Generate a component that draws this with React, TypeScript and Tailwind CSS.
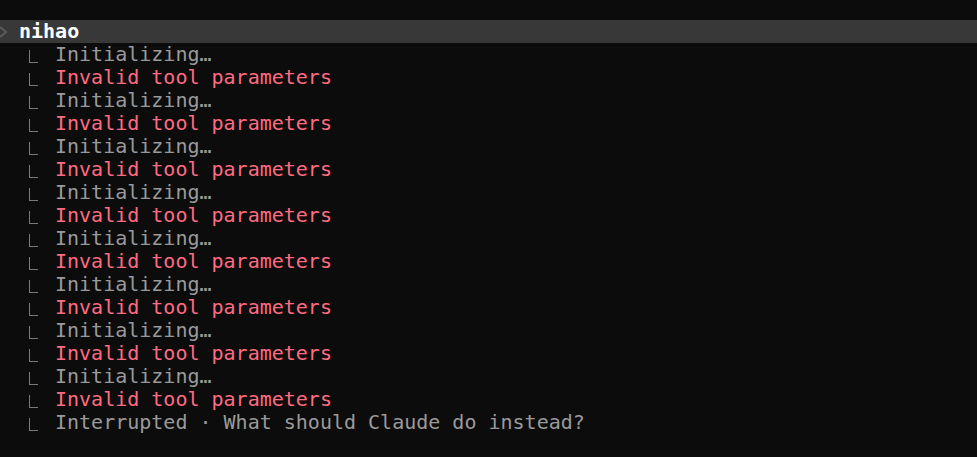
// terminal transcript view
import React from "react";

const steps = Array.from({ length: 8 });

const Branch = ({ children, tone }: { children: React.ReactNode; tone: string }) => (
  <div className="flex h-[23px] items-center">
    <span className="ml-[29px] mb-[3px] h-[13px] w-[9px] self-end border-b border-l border-[#7a7a7a]" />
    <span className={`ml-[17px] whitespace-pre ${tone}`}>{children}</span>
  </div>
);

const App = () => {
  return (
    <div
      className="h-screen w-full overflow-hidden bg-[#0c0c0c] pt-[20px] text-[20px] leading-[23px]"
      style={{ fontFamily: '"DejaVu Sans Mono", "Liberation Mono", monospace' }}
    >
      {/* prompt row */}
      <div className="relative flex h-[23px] items-center bg-[#383838]">
        <svg className="absolute left-0 top-[6px]" width="8" height="12" viewBox="0 0 8 12">
          <path d="M0 1 L6 6 L0 11" fill="none" stroke="#5a5a5a" strokeWidth="2" />
        </svg>
        <span className="ml-[19px] font-bold text-white">nihao</span>
      </div>

      {/* tool calls */}
      {steps.map((_, i) => (
        <React.Fragment key={i}>
          <Branch tone="text-[#9a9a9a]">Initializing…</Branch>
          <Branch tone="text-[#ff6b80]">Invalid tool parameters</Branch>
        </React.Fragment>
      ))}
      <Branch tone="text-[#9a9a9a]">Interrupted · What should Claude do instead?</Branch>
    </div>
  );
};

export default App;
